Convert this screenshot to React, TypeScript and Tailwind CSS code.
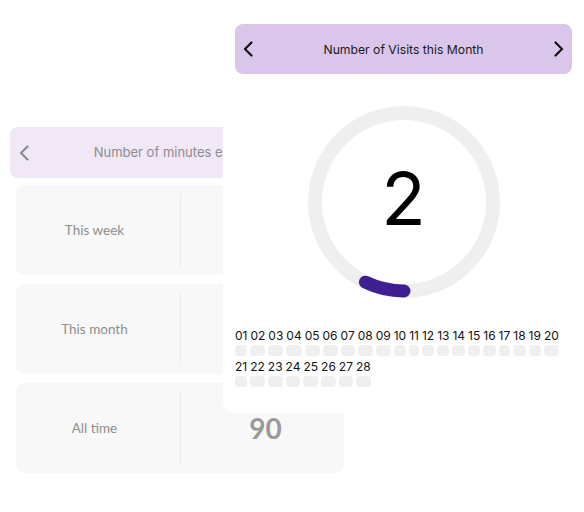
import React from "react";

const Chevron = ({ dir, color, className }: { dir: "left" | "right"; color: string; className?: string }) => (
  <svg width="10" height="16" viewBox="0 0 10 16" className={className} fill="none">
    {dir === "left" ? (
      <path d="M8.5 1.5 L2 8 L8.5 14.5" stroke={color} strokeWidth="2.2" strokeLinecap="round" strokeLinejoin="round" />
    ) : (
      <path d="M1.5 1.5 L8 8 L1.5 14.5" stroke={color} strokeWidth="2.2" strokeLinecap="round" strokeLinejoin="round" />
    )}
  </svg>
);

const rows = [
  { label: "This week", value: "30" },
  { label: "This month", value: "60" },
  { label: "All time", value: "90" },
];

const days = Array.from({ length: 28 }, (_, i) => String(i + 1).padStart(2, "0"));

export default function App() {
  const r = 89;
  const c = 2 * Math.PI * r;
  const dash = (2 / 28) * c;
  return (
    <div className="relative w-[584px] h-[512px] bg-white overflow-hidden" style={{ fontFamily: "Inter, 'Liberation Sans', sans-serif" }}>
      {/* back card */}
      <div className="pt-[127px] pl-[10px] w-[350px]">
        <div className="relative h-[51px] rounded-lg bg-[#f0e7f7] flex items-center justify-center">
          <Chevron dir="left" color="#8a8a8a" className="absolute left-[9px] top-[18px]" />
          <span className="text-[13px] text-[#8c8c8c] pl-[8px]">Number of minutes exercised</span>
        </div>
        <div className="mt-[7px] px-[6px] flex flex-col gap-[9px]">
          {rows.map((row) => (
            <div key={row.label} className="h-[90px] rounded-lg bg-[#f8f8f8] flex">
              <div className="flex-1 flex items-center justify-center text-[13.5px] text-[#8e8e8e] pr-[7px]" style={{ fontFamily: "Lato, 'Open Sans', sans-serif" }}>
                {row.label}
              </div>
              <div className="w-px my-2 bg-[#ececec]" />
              <div className="flex-1 flex items-center justify-center text-[28px] font-bold text-[#9a9a9a] pl-[6px]" style={{ fontFamily: "Lato, 'Open Sans', sans-serif" }}>
                {row.value}
              </div>
            </div>
          ))}
        </div>
      </div>

      {/* front card */}
      <div className="absolute left-[223px] top-[12px] w-[361px] h-[401px] rounded-[12px] bg-white z-10 p-3 flex flex-col">
        <div className="h-[50px] rounded-lg bg-[#dac6ea] flex items-center justify-between px-[8px]">
          <Chevron dir="left" color="#111" />
          <span className="text-[12.2px] text-[#1a1a1a] pt-[2px]">Number of Visits this Month</span>
          <Chevron dir="right" color="#111" />
        </div>
        <div className="mt-[32px] flex justify-center">
          <div className="relative w-[192px] h-[192px]">
            <svg width="192" height="192" viewBox="0 0 192 192">
              <circle cx="96" cy="96" r={r} stroke="#efefef" strokeWidth="14" fill="none" />
              <circle
                cx="96"
                cy="96"
                r={r}
                stroke="#3e1f8f"
                strokeWidth="13"
                fill="none"
                strokeLinecap="round"
                strokeDasharray={`${dash} ${c}`}
                transform="rotate(90 96 96)"
              />
            </svg>
            <div className="absolute inset-0 flex items-center justify-center text-[73px] leading-none text-black pb-[8px]">2</div>
          </div>
        </div>
        <div className="mt-[31px] flex flex-wrap gap-x-[3px] gap-y-[4px]">
          {days.map((d) => (
            <div key={d} className="flex flex-col">
              <span className="text-[12px] leading-[13px] text-[#111]">{d}</span>
              <div className="mt-[3px] h-[11px] rounded-[4px] bg-[#efefef]" />
            </div>
          ))}
        </div>
      </div>
    </div>
  );
}
